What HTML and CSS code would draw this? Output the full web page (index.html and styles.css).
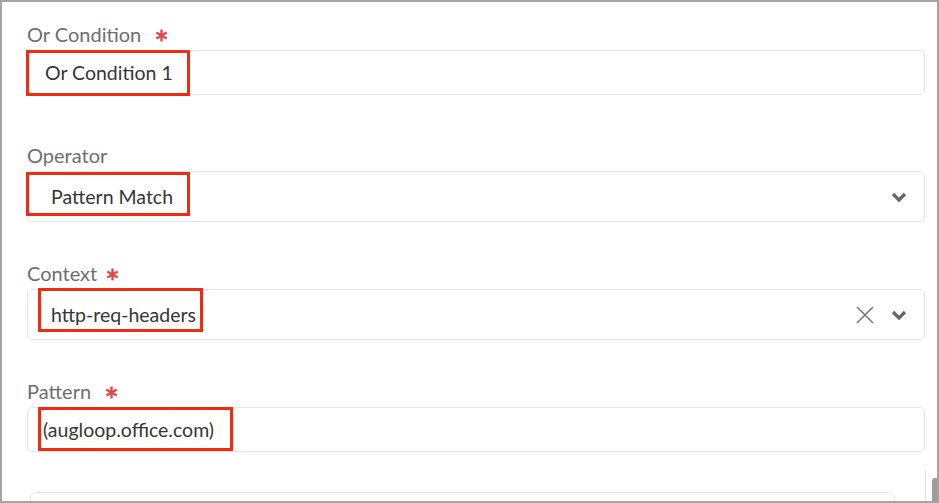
FILE: index.html
```html
<!DOCTYPE html>
<html>
<head>
<meta charset="utf-8">
<link rel="stylesheet" href="styles.css">
</head>
<body>
<div class="frame">
  <div class="field field-first">
    <div class="label">Or Condition <span class="req req-wide"><svg viewBox="0 0 12 12" width="13" height="13"><g stroke="#e0474c" stroke-width="2.2" stroke-linecap="butt"><line x1="6" y1="0.5" x2="6" y2="11.5"/><line x1="1.2" y1="3.2" x2="10.8" y2="8.8"/><line x1="1.2" y1="8.8" x2="10.8" y2="3.2"/></g></svg></span></div>
    <div class="box box-text pad-a">
      <span class="value">Or Condition 1</span>
      <span class="mark mark-1"></span>
    </div>
  </div>

  <div class="field">
    <div class="label">Operator</div>
    <div class="box box-select pad-b">
      <span class="value">Pattern Match</span>
      <span class="icons">
        <svg class="chev" viewBox="0 0 16 10" width="16" height="10"><path d="M2 2 L8 8 L14 2" fill="none" stroke="#666" stroke-width="3.2" stroke-linejoin="miter"/></svg>
      </span>
      <span class="mark mark-2"></span>
    </div>
  </div>

  <div class="field">
    <div class="label">Context <span class="req"><svg viewBox="0 0 12 12" width="13" height="13"><g stroke="#e0474c" stroke-width="2.2"><line x1="6" y1="0.5" x2="6" y2="11.5"/><line x1="1.2" y1="3.2" x2="10.8" y2="8.8"/><line x1="1.2" y1="8.8" x2="10.8" y2="3.2"/></g></svg></span></div>
    <div class="box box-select pad-b">
      <span class="value">http-req-headers</span>
      <span class="icons">
        <svg class="clear" viewBox="0 0 18 18" width="18" height="18"><path d="M1 1 L17 17 M17 1 L1 17" fill="none" stroke="#777" stroke-width="1.6"/></svg>
        <svg class="chev" viewBox="0 0 16 10" width="16" height="10"><path d="M2 2 L8 8 L14 2" fill="none" stroke="#666" stroke-width="3.2"/></svg>
      </span>
      <span class="mark mark-3"></span>
    </div>
  </div>

  <div class="field">
    <div class="label">Pattern <span class="req req-wide"><svg viewBox="0 0 12 12" width="13" height="13"><g stroke="#e0474c" stroke-width="2.2"><line x1="6" y1="0.5" x2="6" y2="11.5"/><line x1="1.2" y1="3.2" x2="10.8" y2="8.8"/><line x1="1.2" y1="8.8" x2="10.8" y2="3.2"/></g></svg></span></div>
    <div class="box box-text pad-c">
      <span class="value">(augloop.office.com)</span>
      <span class="mark mark-4"></span>
    </div>
  </div>

  <div class="next"></div>
  <div class="track"></div>
  <div class="thumb"></div>
</div>
</body>
</html>
```

FILE: styles.css
```css
html, body {
  margin: 0;
  padding: 0;
  background: #ffffff;
}

.frame {
  position: relative;
  box-sizing: border-box;
  width: 939px;
  height: 503px;
  border: 2px solid #a4a4a4;
  padding: 21px 12px 0 25px;
  overflow: hidden;
  font-family: Lato, "Open Sans", sans-serif;
  background: #ffffff;
}

.field {
  margin-bottom: 40px;
}

.field-first {
  margin-bottom: 49px;
}

.label {
  display: flex;
  align-items: center;
  height: 22px;
  line-height: 22px;
  font-size: 20px;
  color: #6e6e6e;
  margin-bottom: 5px;
}

.req {
  display: inline-flex;
  margin-left: 9px;
  margin-top: 3px;
}

.req-wide {
  margin-left: 14px;
}

.box {
  position: relative;
  display: flex;
  align-items: center;
  box-sizing: border-box;
  border: 1px solid #e4e4e4;
  border-radius: 5px;
  font-size: 19.5px;
  color: #353535;
  background: #ffffff;
}

.box-text {
  height: 45px;
}

.box-select {
  height: 51px;
}

.pad-a { padding-left: 17px; }
.pad-b { padding-left: 23px; }
.pad-c { padding-left: 15px; }

.value {
  flex: 1;
  line-height: 22px;
}

.icons {
  display: flex;
  align-items: center;
  gap: 17px;
  padding-right: 17px;
}

.chev {
  display: block;
}

.clear {
  display: block;
}

.mark {
  position: absolute;
  box-sizing: border-box;
  border: 3px solid #ef2b14;
  pointer-events: none;
}

.mark-1 { left: -2px; top: -1px; width: 164px; height: 46px; }
.mark-2 { left: -2px; top: 0px; width: 164px; height: 44px; }
.mark-3 { left: 10px; top: -2px; width: 165px; height: 44px; }
.mark-4 { left: 10px; top: -1px; width: 195px; height: 44px; }

.next {
  margin-left: 3px;
  margin-right: 30px;
  height: 20px;
  border: 1px solid #e6e6e6;
  border-radius: 6px;
  margin-top: 13px;
}

.track {
  position: absolute;
  right: 11px;
  bottom: 0;
  width: 1px;
  height: 31px;
  background: #e2e2e2;
}

.thumb {
  position: absolute;
  right: 0;
  bottom: 0;
  width: 5px;
  height: 23px;
  background: #9c9c9c;
  border-radius: 3px 0 0 0;
}
```
